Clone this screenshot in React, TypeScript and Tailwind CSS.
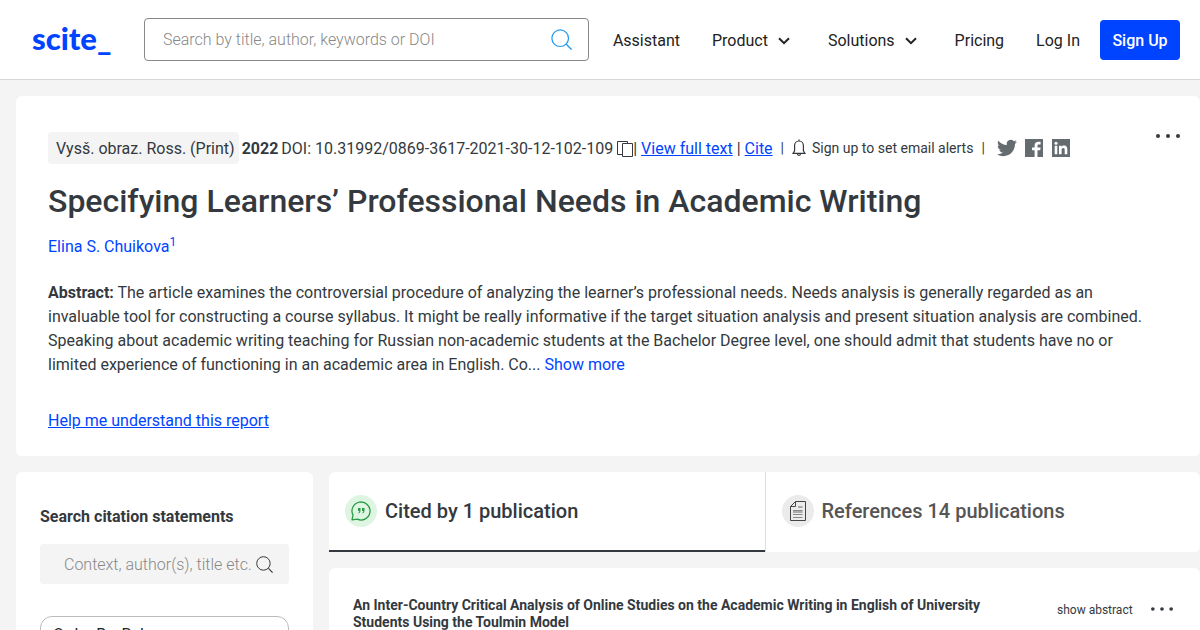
import React, { type ReactNode } from "react";

function SearchIcon({ className }: { className: string }) {
  return (
    <svg viewBox="0 0 24 24" fill="none" stroke="currentColor" className={className} aria-hidden="true">
      <circle cx="10.5" cy="10.5" r="9.5" strokeWidth="1.4" />
      <path d="M17.500 17.500l6 6" strokeWidth="1.6" />
    </svg>
  );
}

function Chevron() {
  return (
    <svg viewBox="0 0 12 8" fill="none" stroke="currentColor" strokeWidth="2" className="mr-1.5 h-2 w-3" aria-hidden="true">
      <path d="M1 1.2l5 5 5-5" />
    </svg>
  );
}

function Dots({ className }: { className: string }) {
  return (
    <svg viewBox="0 0 24 4" fill="currentColor" className={className} aria-hidden="true">
      <circle cx="2" cy="2" r="2" />
      <circle cx="12" cy="2" r="2" />
      <circle cx="22" cy="2" r="2" />
    </svg>
  );
}

function CopyIcon() {
  return (
    <svg viewBox="0 0 16 16" fill="none" stroke="currentColor" strokeWidth="1" className="h-4 w-4" aria-hidden="true">
      <path d="M5.500 13.500h-5v-13h10v2" />
      <path d="M5.500 2.500h10v13h-10z" />
    </svg>
  );
}

function BellIcon() {
  return (
    <svg viewBox="0 0 14 18" fill="none" stroke="currentColor" strokeWidth="1.2" className="h-[18px] w-[14px]" aria-hidden="true">
      <path d="M7 .5v1.5M1 14.400h12L11.400 11.800V6.600C11.400 4 9.600 2 7 2S2.600 4 2.600 6.600v5.200z" />
      <path d="M5.400 14.500c0 2.500 3.200 2.500 3.200 0" />
    </svg>
  );
}

function TwitterIcon() {
  return (
    <svg viewBox="0 0 24 24" fill="currentColor" className="h-5 w-5" aria-hidden="true">
      <path d="M23.953 4.570a10 10 0 0 1-2.825.775 4.958 4.958 0 0 0 2.163-2.723c-.951.555-2.005.959-3.127 1.184a4.920 4.920 0 0 0-8.384 4.482C7.690 8.095 4.067 6.130 1.640 3.162a4.822 4.822 0 0 0-.666 2.475c0 1.710.870 3.213 2.188 4.096a4.904 4.904 0 0 1-2.228-.616v.060a4.923 4.923 0 0 0 3.946 4.827 4.996 4.996 0 0 1-2.212.085 4.936 4.936 0 0 0 4.604 3.417 9.867 9.867 0 0 1-6.102 2.105c-.390 0-.779-.023-1.170-.067a13.995 13.995 0 0 0 7.557 2.209c9.053 0 13.998-7.496 13.998-13.985 0-.210 0-.420-.015-.630a9.935 9.935 0 0 0 2.460-2.548z" />
    </svg>
  );
}

function FacebookIcon() {
  return (
    <svg viewBox="0 0 18 18" className="h-[18px] w-[18px]" aria-hidden="true">
      <path fill="currentColor" d="M0 0h18v18h-5.500v-6.800h2.700l.4-2.700h-3.100V6.700c0-.8.300-1.300 1.400-1.300h1.700V2.900c-.3 0-1.300-.1-2.300-.1-2.200 0-3.700 1.300-3.700 3.700v2H7v2.700h2.600V18H0z" />
    </svg>
  );
}

function LinkedinIcon() {
  return (
    <svg viewBox="0 0 18 18" className="h-[18px] w-[18px]" aria-hidden="true">
      <path fill="currentColor" d="M0 0h18v18H0z" />
      <path fill="#fff" d="M2.700 6.800h2.600v8.500H2.700zM7 6.800h2.500v1.100c.5-.8 1.400-1.300 2.600-1.300 2.600 0 3.200 1.700 3.200 4v4.700h-2.600v-4.200c0-1.100-.1-2.200-1.400-2.200s-1.700 1-1.700 2.200v4.200H7z" />
      <circle fill="#fff" cx="4" cy="4.200" r="1.500" />
    </svg>
  );
}

function QuoteBubble() {
  return (
    <svg viewBox="0 0 32 32" className="h-8 w-8 shrink-0" aria-hidden="true">
      <circle cx="16" cy="16" r="16" fill="#def5e1" />
      <path d="M7 24.800l1-4.700A9 9 0 1 1 12.300 24.200z" fill="none" stroke="#2a9c48" strokeWidth="1.300" strokeLinejoin="round" />
      <path d="M13 13h2.500v2.500c0 1.500-.7 2.500-2 3v-.9c.6-.4.8-.9.800-1.600H13zM17 13h2.500v2.500c0 1.500-.7 2.500-2 3v-.9c.6-.4.8-.9.800-1.600H17z" fill="#2a9c48" />
    </svg>
  );
}

function DocumentBadge() {
  return (
    <svg viewBox="0 0 32 32" className="h-8 w-8 shrink-0" aria-hidden="true">
      <circle cx="16" cy="16" r="16" fill="#ebebeb" />
      <path d="M13.500 6.500h10v19h-15v-14zv5h-5" fill="none" stroke="#444" />
      <path d="M16 12h4.500" stroke="#aaa" strokeWidth="2" />
      <path d="M11 15.500h9.500M11 19.500h9.500M11 22.500h9.500" stroke="#888" />
      <path d="M11 17h9.500" stroke="#aaa" strokeWidth="2" />
    </svg>
  );
}

function NavLink({ children }: { children: ReactNode }) {
  return (
    <a href="#" className="flex items-center gap-2.5 whitespace-nowrap">
      {children}
    </a>
  );
}

export default function App() {
  return (
    <div className="h-screen overflow-hidden bg-[#f4f4f4] font-['Roboto',sans-serif] text-base text-[#33393e]">
      <header className="flex h-20 items-center border-b border-[#d8d8d8] bg-white pr-5 pl-8 text-[#222]">
        <a href="#" className="w-28 shrink-0 pb-1 font-['Lato',sans-serif] text-[31px] leading-8 font-black text-[#0044ff]">
          scite_
        </a>
        <form className="flex h-[43px] min-w-0 flex-1 items-center rounded border border-[#888] pr-4 pl-[18px]">
          <input
            aria-label="Search"
            placeholder="Search by title, author, keywords or DOI"
            className="min-w-0 flex-1 font-light outline-none placeholder:text-[#888]"
          />
          <button type="button" aria-label="Search">
            <SearchIcon className="h-[21px] w-[21px] text-[#1e9bf0]" />
          </button>
        </form>
        <nav className="mt-0.5 ml-6 flex shrink-0 items-center gap-8">
          <NavLink>Assistant</NavLink>
          <NavLink>Product <Chevron /></NavLink>
          <NavLink>Solutions <Chevron /></NavLink>
          <NavLink>Pricing</NavLink>
          <NavLink>Log In</NavLink>
        </nav>
        <button className="ml-5 h-10 w-20 shrink-0 rounded bg-[#0044ff] pt-0.5 font-medium text-white">Sign Up</button>
      </header>

      <main className="grid grid-cols-[297px_1fr] gap-4 pt-4 pl-4">
        <article className="col-span-2 rounded-md bg-white px-8 pt-9 pb-[23px]">
          <div className="flex items-start justify-between">
            <div className="flex h-8 items-center whitespace-nowrap">
              <span className="rounded bg-[#f4f4f4] pt-[5px] pr-1 pb-[3px] pl-2">Vysš. obraz. Ross. (Print)</span>
              <div className="mt-0.5 flex items-center">
                <strong className="mx-[3px] font-bold">2022</strong>
                <span>DOI: 10.31992/0869-3617-2021-30-12-102-109</span>
                <button aria-label="Copy DOI" className="ml-1"><CopyIcon /></button>
                <span className="mr-1">|</span>
                <a href="#" className="text-[#0044ff] underline">View full text</a>
                <span className="mx-1">|</span>
                <a href="#" className="text-[#0044ff] underline">Cite</a>
              </div>
              <span className="mx-2 text-sm">|</span>
              <button className="flex items-center gap-1.5 text-sm">
                <BellIcon />
                Sign up to set email alerts
              </button>
              <span className="mx-2 text-sm">|</span>
              <div className="ml-1 flex items-center gap-2 text-[#656c70]">
                <a href="#" aria-label="Twitter"><TwitterIcon /></a>
                <a href="#" aria-label="Facebook"><FacebookIcon /></a>
                <a href="#" aria-label="LinkedIn" className="ml-px"><LinkedinIcon /></a>
              </div>
            </div>
            <button aria-label="More options" className="mt-0.5 -mr-3"><Dots className="h-1 w-6" /></button>
          </div>
          <h1 className="mt-4 text-[32px] leading-[42px] font-medium">
            Specifying Learners’ Professional Needs in Academic Writing
          </h1>
          <p className="mt-[13px] leading-6 text-[#0044ff]">
            <a href="#">Elina S. Chuikova<sup className="text-xs">1</sup></a>
          </p>
          <p className="mt-[22px] leading-6">
            <strong className="font-bold">Abstract:</strong> The article examines the controversial procedure of analyzing the learner’s professional needs. Needs analysis is generally regarded as an
            <br />
            invaluable tool for constructing a course syllabus. It might be really informative if the target situation analysis and present situation analysis are combined.
            <br />
            Speaking about academic writing teaching for Russian non-academic students at the Bachelor Degree level, one should admit that students have no or
            <br />
            limited experience of functioning in an academic area in English. Co...{" "}
            <button className="text-[#0044ff]">Show more</button>
          </p>
          <a href="#" className="mt-8 inline-block leading-6 text-[#0044ff] underline">Help me understand this report</a>
        </article>

        <aside className="rounded-md bg-white px-6 pt-[33px] pb-8">
          <label htmlFor="statements" className="block leading-6 font-bold">Search citation statements</label>
          <div className="mt-[15px] flex h-10 items-center rounded bg-[#f4f4f4] pr-4 pl-6">
            <input
              id="statements"
              placeholder="Context, author(s), title etc."
              className="min-w-0 flex-1 pt-0.5 font-light outline-none placeholder:text-[#888]"
            />
            <SearchIcon className="h-[17px] w-[17px] shrink-0" />
          </div>
          <select
            aria-label="Order"
            className="mt-8 h-[38px] w-full appearance-none rounded-xl border border-[#bbb] bg-white px-3 text-[#222]"
          >
            <option>Order By: Relevance</option>
          </select>
        </aside>

        <section className="min-w-0">
          <div className="grid h-20 grid-cols-2 rounded-md bg-white text-xl font-medium">
            <button className="flex items-center gap-2 border-b-2 border-[#33393e] pl-4">
              <QuoteBubble />
              Cited by 1 publication
            </button>
            <div className="flex border-l border-[#ddd]">
              <button className="flex flex-1 items-center gap-2 border-b-2 border-transparent pl-4 text-[#555]">
                <DocumentBadge />
                References 14 publications
              </button>
            </div>
          </div>
          <div className="mt-4 flex items-start rounded-md bg-white px-6 pt-[29px] pb-24">
            <h2 className="w-[704px] text-sm leading-[17px] font-bold">
              An Inter-Country Critical Analysis of Online Studies on the Academic Writing in English of University
              <br />
              Students Using the Toulmin Model
            </h2>
            <button className="mt-[5px] text-xs whitespace-nowrap">show abstract</button>
            <button aria-label="More options" className="mt-2.5 ml-[18px]"><Dots className="h-1 w-[22px]" /></button>
          </div>
        </section>
      </main>
    </div>
  );
}
